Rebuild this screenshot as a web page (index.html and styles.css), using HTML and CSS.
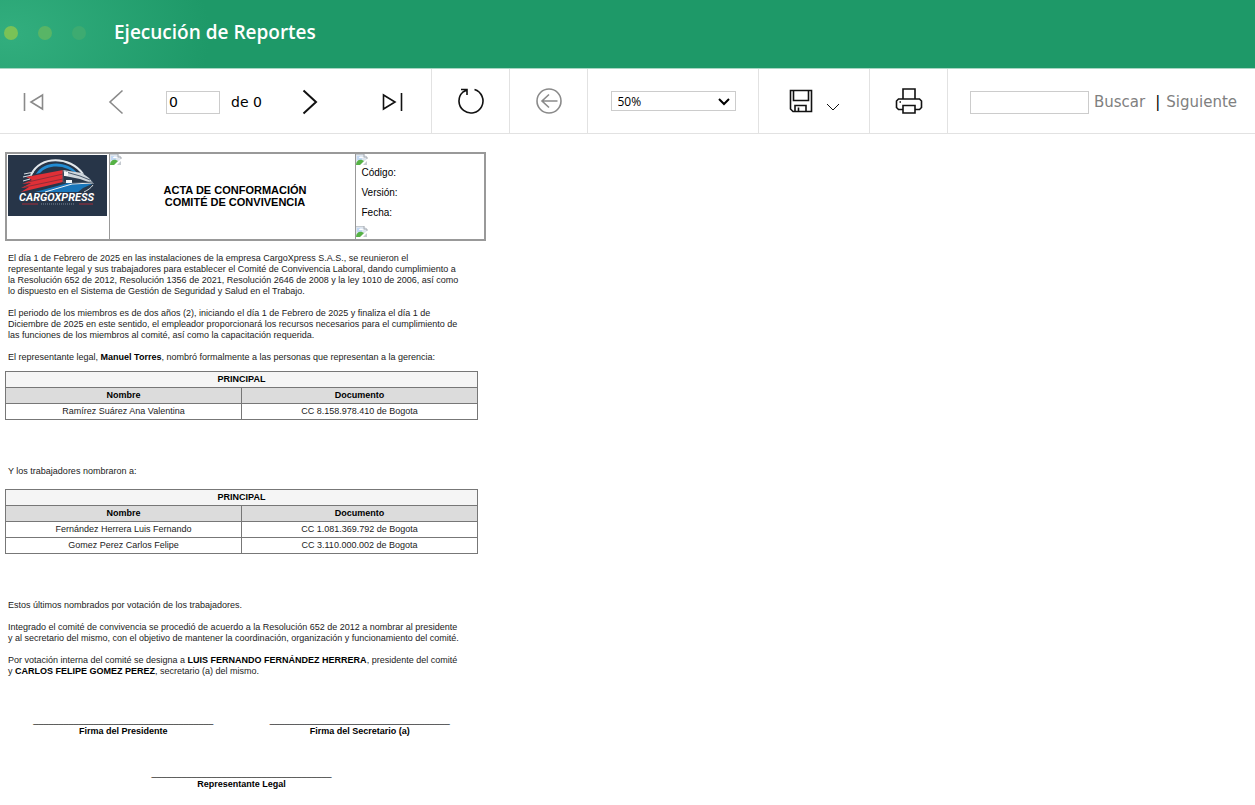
FILE: index.html
```html
<!DOCTYPE html>
<html lang="es">
<head>
    <meta charset="UTF-8">
    <meta name="viewport" content="width=device-width, initial-scale=1.0">
    <title>Ejecución de Reportes</title>
    <link rel="stylesheet" href="styles.css">
</head>
<body>
    <!-- Iconos compartidos -->
    <svg width="0" height="0" class="sprite" aria-hidden="true">
        <symbol id="broken" viewBox="0 0 12 12">
            <path d="M0 0h8l3 3v2L4 11H0z" fill="#dfe6ee"/>
            <path d="M0 0h8v3h3v2" fill="none" stroke="#a9adb2"/>
            <path d="M1 2h5v4H1z" fill="#c3d8f3"/>
            <path d="M3 4c0-2 4-2 4 0z" fill="#fff"/>
            <path d="M0 11c0-4 3-6 6-5l2 1-4 4z" fill="#56b245"/>
            <path d="M7 11l4-4v4z" fill="#c5cad0"/>
        </symbol>
    </svg>

    <header class="top-bar">
        <span class="dot dot-1"></span>
        <span class="dot dot-2"></span>
        <span class="dot dot-3"></span>
        <h1>Ejecución de Reportes</h1>
    </header>

    <div class="toolbar">
        <div class="group pager">
            <button type="button" class="off" aria-label="Primera página"><svg width="22" height="20" viewBox="0 0 22 20"><path d="M1.500 1v18M19.500 3v14L8 10z"/></svg></button>
            <button type="button" class="off prev" aria-label="Página anterior"><svg width="16" height="26" viewBox="0 0 16 26"><path d="M14.500 1.500L2 13l12.500 11.500"/></svg></button>
            <div class="page-box">
                <input type="text" value="0" id="page" aria-label="Página">
                <label for="page">de 0</label>
            </div>
            <button type="button" class="next" aria-label="Página siguiente"><svg class="bold" width="16" height="26" viewBox="0 0 16 26"><path d="M1.500 1.500L14 13L1.500 24.500"/></svg></button>
            <button type="button" aria-label="Última página"><svg width="22" height="20" viewBox="0 0 22 20"><path d="M20.500 1v18M2.500 3v14L14 10z"/></svg></button>
        </div>
        <div class="group">
            <button type="button" aria-label="Actualizar"><svg width="28" height="28" viewBox="0 0 28 28"><path d="M17.500 2.500A12 12 0 1 1 6 5L10 3M4 2.500H10V8"/></svg></button>
        </div>
        <div class="group">
            <button type="button" class="off" aria-label="Volver"><svg width="28" height="28" viewBox="0 0 28 28"><circle cx="14" cy="14" r="12"/><path d="M22.500 14H7M14 7.500L7 14l7 6.500"/></svg></button>
        </div>
        <div class="group zoom">
            <div class="select-box">
                <select aria-label="Zoom"><option>50%</option><option>100%</option></select>
                <svg width="14" height="9" viewBox="0 0 14 9"><path d="M2 2l5 5 5-5"/></svg>
            </div>
        </div>
        <div class="group save">
            <button type="button" aria-label="Exportar"><svg width="24" height="24" viewBox="0 0 24 24"><path d="M1.500 1.500h21v21H4l-2.500-2.500zM4.500 1.500v10h15v-10M6 22.500V16.500h11v6M9.500 18.500v4"/></svg><svg class="thin" width="14" height="8" viewBox="0 0 14 8"><path d="M1 1l6 6 6-6"/></svg></button>
        </div>
        <div class="group">
            <button type="button" aria-label="Imprimir"><svg width="28" height="28" viewBox="0 0 28 28"><path d="M8 12V2h12v10M8 22.500H3.500l-2-2v-6.500l2-2h21l2 2v6.500l-2 2H20M8 18.500h12V26H8zM4.500 15h1.500"/></svg></button>
        </div>
        <div class="group search">
            <input type="text" aria-label="Texto a buscar">
            <a href="#">Buscar</a>
            <span class="sep">|</span>
            <a href="#">Siguiente</a>
        </div>
    </div>

    <main class="report">
        <table class="head-table">
            <tr>
                <td class="logo-cell">
                    <svg class="logo" viewBox="0 0 99 61" role="img" aria-label="CargoXpress">
                        <rect width="99" height="61" fill="#273548"/>
                        <path d="M23 20C32 0 62 1 75 19" fill="none" stroke="#e3e8ec" stroke-width="2"/>
                        <path d="M28 19C35 6 59 4 70 19L60 14C49 9 37 12 32 18z" fill="#218bd2"/>
                        <path d="M54 15l19 3c8 3 12 6 13 11-1 6-8 9-17 9H49z" fill="#28384b"/>
                        <path d="M18 22L55 15v12L13 37l8-5-8 1 10-5-9 1 10-4z" fill="#df3037"/>
                        <path d="M17 32l38-8M20 27l35-8" stroke="#902d38" stroke-width="1"/>
                        <path d="M27 37l33-9 24 1-9 4-5 4z" fill="#1976ba"/>
                        <path d="M37 37l27-8 20-1" fill="none" stroke="#eef1f4"/>
                        <path d="M55 15l19 3 7 5 5 6-14-5-15-3z" fill="#cfd6dc"/>
                        <path d="M55 15v12l10 1 20-1M58 17l14 4 10 4" fill="none" stroke="#49596b"/>
                        <path d="M56 17h4v4h-4zM58 25h6v3h-6z" fill="#f3f5f7"/>
                        <path d="M26 17l-10 2M24 20l-9 2M22 24l-7 2M85 30c-2 3-5 5-9 7" stroke="#d8dfe5" fill="none"/>
                        <text x="11" y="46">CARGOXPRESS</text>
                        <path d="M14 49h16M71 49h14" stroke="#a52e3b"/>
                        <path d="M33 49h34" stroke="#7e8998" stroke-dasharray="1 1"/>
                    </svg>
                </td>
                <td class="title-cell">
                    <svg class="broken"><use href="#broken"/></svg>
                    <h2>ACTA DE CONFORMACIÓN<br>COMITÉ DE CONVIVENCIA</h2>
                </td>
                <td class="info-cell">
                    <svg class="broken"><use href="#broken"/></svg>
                    <p>Código:</p>
                    <p>Versión:</p>
                    <p>Fecha:</p>
                    <svg class="broken"><use href="#broken"/></svg>
                </td>
            </tr>
        </table>

        <div class="text">
            <p>El día 1 de Febrero de 2025 en las instalaciones de la empresa CargoXpress S.A.S., se reunieron el<br>
            representante legal y sus trabajadores para establecer el Comité de Convivencia Laboral, dando cumplimiento a<br>
            la Resolución 652 de 2012, Resolución 1356 de 2021, Resolución 2646 de 2008 y la ley 1010 de 2006, así como<br>
            lo dispuesto en el Sistema de Gestión de Seguridad y Salud en el Trabajo.</p>
            <p>El periodo de los miembros es de dos años (2), iniciando el día 1 de Febrero de 2025 y finaliza el día 1 de<br>
            Diciembre de 2025 en este sentido, el empleador proporcionará los recursos necesarios para el cumplimiento de<br>
            las funciones de los miembros al comité, así como la capacitación requerida.</p>
            <p>El representante legal, <strong>Manuel Torres</strong>, nombró formalmente a las personas que representan a la gerencia:</p>
        </div>

        <table class="members">
            <tr><th colspan="2" class="main">PRINCIPAL</th></tr>
            <tr><th>Nombre</th><th>Documento</th></tr>
            <tr><td>Ramírez Suárez Ana Valentina</td><td>CC 8.158.978.410 de Bogota</td></tr>
        </table>

        <div class="text after-table workers">
            <p>Y los trabajadores nombraron a:</p>
        </div>

        <table class="members">
            <tr><th colspan="2" class="main">PRINCIPAL</th></tr>
            <tr><th>Nombre</th><th>Documento</th></tr>
            <tr><td>Fernández Herrera Luis Fernando</td><td>CC 1.081.369.792 de Bogota</td></tr>
            <tr><td>Gomez Perez Carlos Felipe</td><td>CC 3.110.000.002 de Bogota</td></tr>
        </table>

        <div class="text after-table">
            <p>Estos últimos nombrados por votación de los trabajadores.</p>
            <p>Integrado el comité de convivencia se procedió de acuerdo a la Resolución 652 de 2012 a nombrar al presidente<br>
            y al secretario del mismo, con el objetivo de mantener la coordinación, organización y funcionamiento del comité.</p>
            <p>Por votación interna del comité se designa a <strong>LUIS FERNANDO FERNÁNDEZ HERRERA</strong>, presidente del comité<br>
            y <strong>CARLOS FELIPE GOMEZ PEREZ</strong>, secretario (a) del mismo.</p>
        </div>

        <!-- Firmas -->
        <div class="signs">
            <div class="sign">____________________________________<br><strong>Firma del Presidente</strong></div>
            <div class="sign">____________________________________<br><strong>Firma del Secretario (a)</strong></div>
            <div class="sign wide">____________________________________<br><strong>Representante Legal</strong></div>
        </div>
    </main>
</body>
</html>
```
FILE: styles.css
```css
* { box-sizing: border-box; margin: 0; padding: 0; }
body { font-family: "Liberation Sans", Arial, sans-serif; background: #fff; color: #000; }
.sprite { position: absolute; }

/* Cabecera */
.top-bar { display: flex; align-items: center; height: 69px; padding: 0 4px 2px; background: radial-gradient(ellipse 200px 130px at 10px 34px, #32ae7e, #1e9968); border-bottom: 1px solid #a9d6c3; }
.dot { width: 14px; height: 14px; margin-right: 20px; border-radius: 50%; background: #79c257; }
.dot-2 { background: #58b566; }
.dot-3 { background: #3dab71; }
.top-bar h1 { margin-left: 8px; padding-bottom: 2px; font: 600 19px "Open Sans", "Noto Sans", sans-serif; color: #fff; }

/* Barra de herramientas */
.toolbar { display: grid; grid-template-columns: 432px 78px 78px 171px 111px 78px 1fr; height: 65px; border-bottom: 1px solid #e2e2e2; font: 14px "DejaVu Sans", Verdana, sans-serif; }
.group { display: flex; align-items: center; justify-content: center; border-right: 1px solid #e2e2e2; }
.group:last-child { border-right: 0; }
.toolbar button { display: flex; align-items: center; border: 0; background: none; color: #111; cursor: pointer; }
.toolbar button.off { color: #8a8a8a; }
.toolbar svg { display: block; fill: none; stroke: currentColor; stroke-width: 1.6; }
.toolbar svg.thin { stroke-width: 1; }
.toolbar svg.bold, .select-box svg { stroke-width: 2; }
.toolbar input, .toolbar select { border: 1px solid #ccc; background: #fff; color: #000; }
.pager { justify-content: space-between; padding: 2px 28px 0 23px; }
.prev { margin-left: 22px; }
.next { margin-right: 22px; }
.page-box { display: flex; align-items: center; gap: 11px; padding-left: 2px; }
.page-box input { width: 54px; height: 23px; padding: 0 2px; font: inherit; }
.select-box { position: relative; color: #000; }
.select-box select { width: 125px; height: 20px; padding: 0 6px; appearance: none; font: 12px "Open Sans", "Noto Sans", sans-serif; }
.select-box svg { position: absolute; right: 5px; top: 6px; pointer-events: none; }
.save button { gap: 13px; }
.save .thin { margin-top: 12px; }
.search { justify-content: flex-start; padding: 2px 0 0 22px; font-size: 15px; }
.search input { width: 119px; height: 23px; padding: 0 2px; margin-right: 5px; }
.search a { color: #808080; text-decoration: none; }
.search .sep { margin: 0 6px 0 10px; }

/* Reporte */
.report { max-width: 486px; padding: 18px 0 0 5px; font-size: 9px; line-height: 11px; }
.head-table { width: 100%; height: 88px; border: 2px solid #999; border-collapse: collapse; }
.head-table td { height: 87px; border-left: 1px solid #999; vertical-align: top; }
.head-table .logo-cell { width: 103px; padding: 1px; border-left: 2px solid #999; }
.logo { display: block; width: 99px; height: 61px; }
.logo text { font: italic 700 11px Roboto, sans-serif; fill: #fff; }
.info-cell { width: 130px; }
.info-cell p { margin-bottom: 6px; padding-left: 6px; font-size: 10px; line-height: 14px; }
.broken { display: block; width: 12px; height: 12px; }
.title-cell h2 { margin-top: 18px; padding-left: 6px; font-size: 11px; line-height: 12px; text-align: center; }
.text { margin-left: 3px; padding-top: 12px; color: #222; white-space: nowrap; }
.text p { margin-bottom: 11px; }
.text p:last-child { margin-bottom: 8px; }
.text strong { color: #000; }
.members { width: 473px; table-layout: fixed; border-collapse: collapse; text-align: center; }
.members th, .members td { height: 16px; border: 1px solid #777; }
.members td { color: #222; }
.members th { background: #dcdcdc; }
.members th.main { background: #f5f5f5; }
.after-table { padding-top: 46px; }
.workers { padding-bottom: 4px; }
.signs { display: grid; grid-template-columns: 1fr 1fr; row-gap: 31px; width: 473px; padding-top: 30px; text-align: center; }
.wide { grid-column: span 2; }
```
